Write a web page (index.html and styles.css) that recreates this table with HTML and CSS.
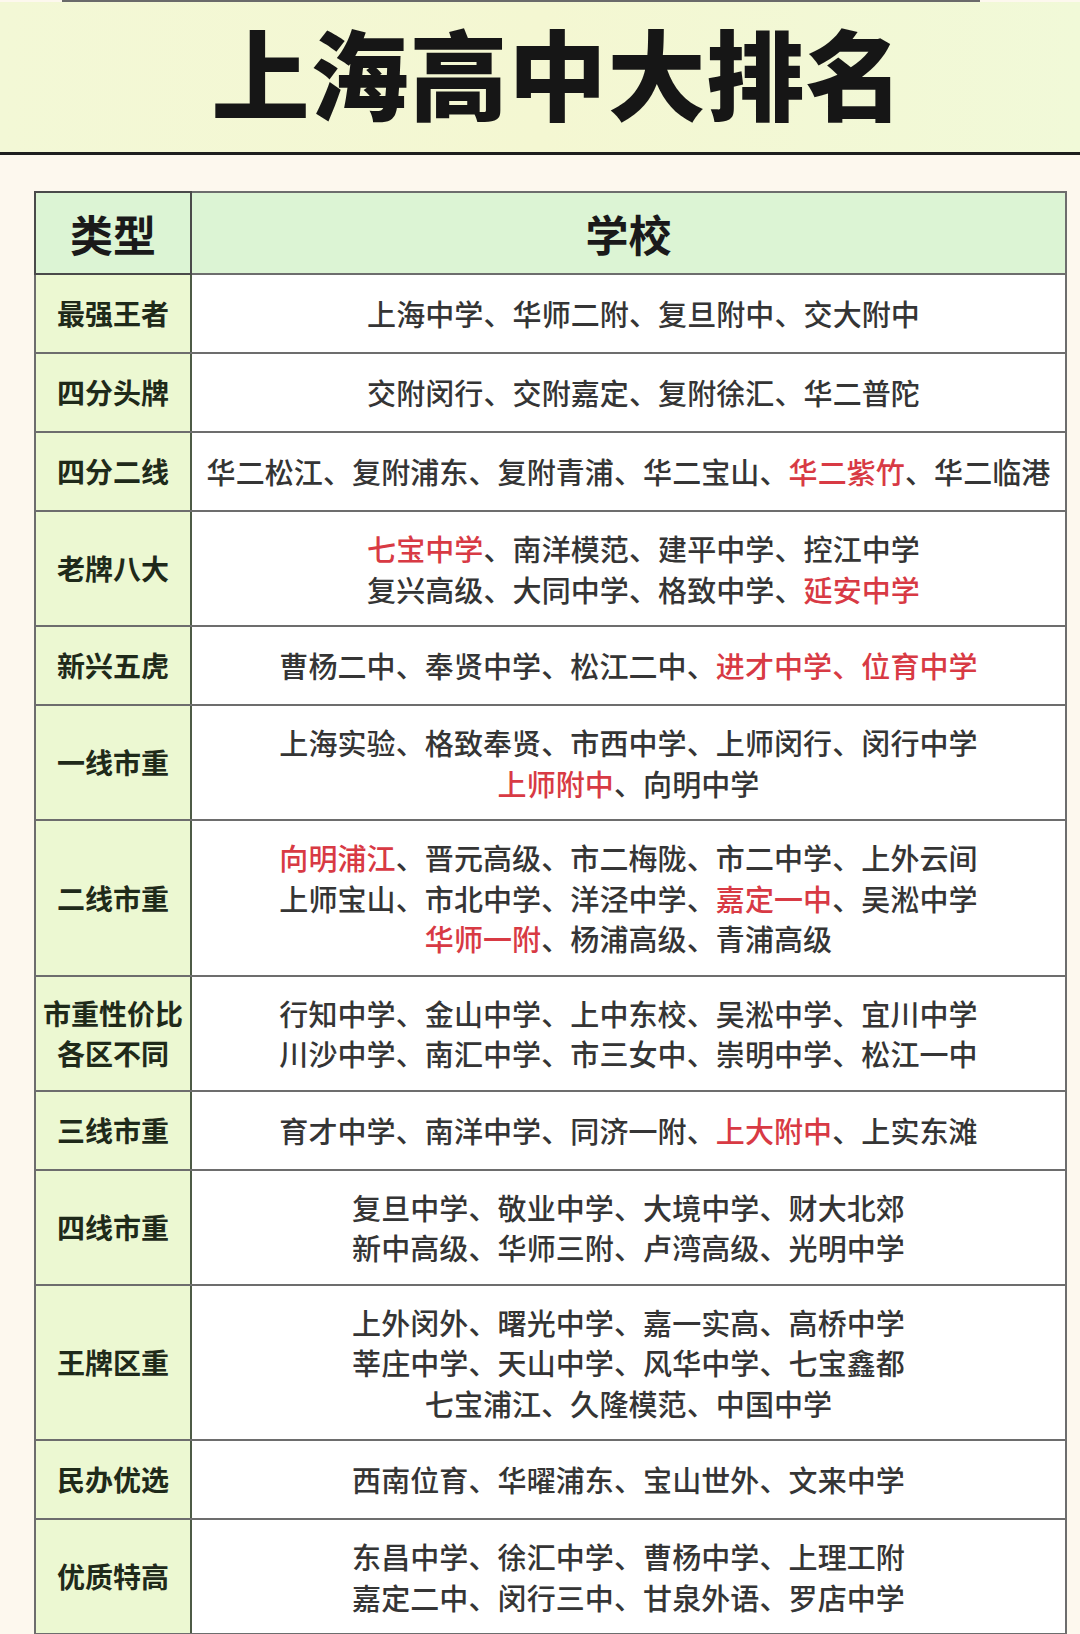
FILE: index.html
```html
<!DOCTYPE html>
<html lang="zh-CN">
<head>
<meta charset="utf-8">
<title>上海高中大排名</title>
<link rel="stylesheet" href="styles.css">
</head>
<body>
<div class="topline"></div>
<header class="banner">
  <h1 class="title">上海高中大排名</h1>
</header>
<main class="content">
  <table class="rank">
    <thead>
      <tr><th class="cat">类型</th><th class="sch">学校</th></tr>
    </thead>
    <tbody>
      <tr><td class="cat">最强王者</td><td class="sch shift">上海中学、华师二附、复旦附中、交大附中</td></tr>
      <tr><td class="cat">四分头牌</td><td class="sch shift">交附闵行、交附嘉定、复附徐汇、华二普陀</td></tr>
      <tr><td class="cat">四分二线</td><td class="sch">华二松江、复附浦东、复附青浦、华二宝山、<span class="hl">华二紫竹</span>、华二临港</td></tr>
      <tr><td class="cat">老牌八大</td><td class="sch shift"><span class="hl">七宝中学</span>、南洋模范、建平中学、控江中学<br>复兴高级、大同中学、格致中学、<span class="hl">延安中学</span></td></tr>
      <tr><td class="cat">新兴五虎</td><td class="sch">曹杨二中、奉贤中学、松江二中、<span class="hl">进才中学、位育中学</span></td></tr>
      <tr><td class="cat">一线市重</td><td class="sch">上海实验、格致奉贤、市西中学、上师闵行、闵行中学<br><span class="hl">上师附中</span>、向明中学</td></tr>
      <tr><td class="cat">二线市重</td><td class="sch"><span class="hl">向明浦江</span>、晋元高级、市二梅陇、市二中学、上外云间<br>上师宝山、市北中学、洋泾中学、<span class="hl">嘉定一中</span>、吴淞中学<br><span class="hl">华师一附</span>、杨浦高级、青浦高级</td></tr>
      <tr><td class="cat">市重性价比<br>各区不同</td><td class="sch">行知中学、金山中学、上中东校、吴淞中学、宜川中学<br>川沙中学、南汇中学、市三女中、崇明中学、松江一中</td></tr>
      <tr><td class="cat">三线市重</td><td class="sch">育才中学、南洋中学、同济一附、<span class="hl">上大附中</span>、上实东滩</td></tr>
      <tr><td class="cat">四线市重</td><td class="sch">复旦中学、敬业中学、大境中学、财大北郊<br>新中高级、华师三附、卢湾高级、光明中学</td></tr>
      <tr><td class="cat">王牌区重</td><td class="sch">上外闵外、曙光中学、嘉一实高、高桥中学<br>莘庄中学、天山中学、风华中学、七宝鑫都<br>七宝浦江、久隆模范、中国中学</td></tr>
      <tr><td class="cat">民办优选</td><td class="sch">西南位育、华曜浦东、宝山世外、文来中学</td></tr>
      <tr><td class="cat">优质特高</td><td class="sch">东昌中学、徐汇中学、曹杨中学、上理工附<br>嘉定二中、闵行三中、甘泉外语、罗店中学</td></tr>
    </tbody>
  </table>
</main>
</body>
</html>
```

FILE: styles.css
```css
html, body {
  margin: 0;
  padding: 0;
}
body {
  background: #fdf8ee;
  font-family: "Noto Sans CJK SC", "Noto Sans", sans-serif;
  color: #333;
  width: 1080px;
  overflow: hidden;
}
.topline {
  height: 2px;
  margin: 0 100px 0 62px;
  background: #6a6a6a;
}
.banner {
  height: 150px;
  background: linear-gradient(90deg, #f3f8d6 0%, #f4f7d2 50%, #f1f9d8 100%);
  border-bottom: 3px solid #1e1e1e;
  display: flex;
  align-items: center;
  justify-content: center;
  padding-left: 36px;
}
.title {
  margin: 0;
  font-size: 98px;
  line-height: 1.15;
  font-weight: 900;
  color: #161616;
  letter-spacing: 1px;
  padding-bottom: 14px;
}
.content {
  padding: 36px 13px 0 34px;
}
.rank {
  width: 1033px;
  border-collapse: collapse;
  border: 2px solid #4a4a4a;
  table-layout: fixed;
}
.rank th, .rank td {
  border: 2px solid #6d6d6d;
  text-align: center;
  vertical-align: middle;
  padding: 16px 0;
  line-height: 40.5px;
  height: 45px;
}
.rank th {
  background: #dcf4d4;
  font-size: 43px;
  font-weight: 700;
  color: #1a1a1a;
  height: 42px;
  line-height: 42px;
  padding: 19px 0;
}
.rank th.cat {
  width: 154px;
  border-color: #4a4a4a;
}
.rank td.cat {
  background: #ecf8d2;
  font-size: 28px;
  font-weight: 700;
  color: #1f2a1a;
  border-right-color: #4d5b46;
  white-space: nowrap;
}
.rank td.sch {
  background: #ffffff;
  font-size: 29px;
  font-weight: 500;
  color: #353535;
  white-space: nowrap;
  letter-spacing: 0.1px;
}
.rank td.shift {
  padding-left: 30px;
}
.hl {
  color: #d83a44;
}
```
